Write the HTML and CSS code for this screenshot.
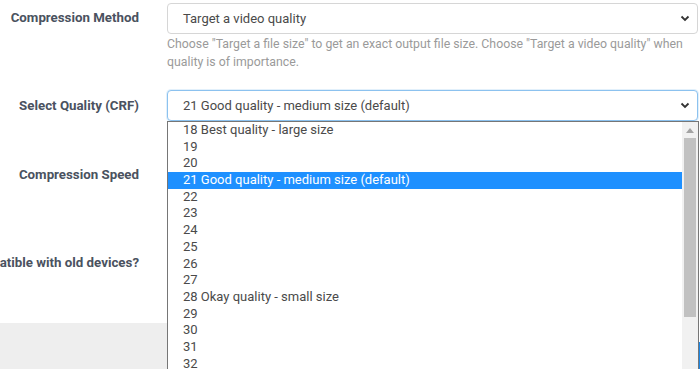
FILE: index.html
```html
<!DOCTYPE html>
<html>
<head>
<meta charset="utf-8">
<link rel="stylesheet" href="styles.css">
</head>
<body>
<div class="form">
  <div class="row row-method">
    <div class="label"><span>Compression Method</span></div>
    <div class="control">
      <div class="select">
        <span>Target a video quality</span>
        <svg class="chev" width="10" height="7" viewBox="0 0 10 7"><path d="M1.5 1.5 L5 5 L8.5 1.5" fill="none" stroke="#333" stroke-width="1.8"/></svg>
      </div>
      <p class="help">Choose "Target a file size" to get an exact output file size. Choose "Target a video quality" when quality is of importance.</p>
    </div>
  </div>
  <div class="row row-quality">
    <div class="label"><span>Select Quality (CRF)</span></div>
    <div class="control">
      <div class="select focus">
        <span>21 Good quality - medium size (default)</span>
        <svg class="chev" width="10" height="7" viewBox="0 0 10 7"><path d="M1.5 1.5 L5 5 L8.5 1.5" fill="none" stroke="#333" stroke-width="1.8"/></svg>
      </div>
    </div>
  </div>
  <div class="row row-speed">
    <div class="label"><span>Compression Speed</span></div>
    <div class="control"></div>
  </div>
  <div class="row row-compat">
    <div class="label"><span>Make the video compatible with old devices?</span></div>
    <div class="control"></div>
  </div>
  <div class="footer"></div>
  <div class="edge-button"></div>

  <div class="dropdown">
    <ul class="options">
      <li>18 Best quality - large size</li>
      <li>19</li>
      <li>20</li>
      <li class="sel">21 Good quality - medium size (default)</li>
      <li>22</li>
      <li>23</li>
      <li>24</li>
      <li>25</li>
      <li>26</li>
      <li>27</li>
      <li>28 Okay quality - small size</li>
      <li>29</li>
      <li>30</li>
      <li>31</li>
      <li>32</li>
      <li>33</li>
    </ul>
    <div class="scrollbar">
      <svg class="up" width="8" height="5" viewBox="0 0 8 5"><path d="M0 5 L4 0 L8 5 Z" fill="#a3a3a3"/></svg>
      <div class="thumb"></div>
    </div>
  </div>
</div>
</body>
</html>
```
FILE: styles.css
```css
html, body {
  margin: 0;
  padding: 0;
  background: #fff;
  overflow: hidden;
}
body {
  font-family: Roboto, "Liberation Sans", Arial, sans-serif;
  width: 700px;
  height: 369px;
}
.form {
  position: relative;
  width: 700px;
  height: 369px;
  overflow: hidden;
}
.row {
  display: grid;
  grid-template-columns: 139px 531px;
  column-gap: 28px;
}
.label {
  display: flex;
  justify-content: flex-end;
  font-size: 13.3px;
  font-weight: 700;
  color: #4a5260;
  white-space: nowrap;
  height: 31px;
  align-items: center;
  min-width: 0;
}
.row-method { padding-top: 3px; }
.row-method .label { height: 29px; }
.row-quality { padding-top: 19px; }
.row-quality .label { height: 31px; }
.row-speed { padding-top: 38px; }
.row-speed .label { height: 31px; }
.row-compat { padding-top: 57px; }
.row-compat .label { height: 31px; }
.select {
  box-sizing: border-box;
  height: 31px;
  border: 1px solid #d6d6d6;
  border-radius: 4px;
  display: flex;
  align-items: center;
  justify-content: space-between;
  padding: 0 7px 0 15px;
  font-size: 13px;
  color: #4a4a4a;
  background: #fff;
}
.select.focus {
  border-color: #8cc2ef;
  box-shadow: 0 0 0 1px rgba(140, 194, 239, 0.25);
}
.chev { display: block; }
.help {
  margin: 0;
  padding-top: 1px;
  font-size: 12.3px;
  line-height: 18px;
  color: #9a9a9a;
}
.footer {
  position: absolute;
  left: 0;
  top: 323px;
  width: 167px;
  height: 46px;
  background: #eeeeee;
}
.edge-button {
  position: absolute;
  left: 699px;
  top: 342px;
  width: 10px;
  height: 40px;
  background: #1e88e5;
}
.dropdown {
  position: absolute;
  left: 167px;
  top: 121px;
  width: 532px;
  height: 260px;
  box-sizing: border-box;
  border: 1px solid #767676;
  background: #fff;
  display: flex;
}
.options {
  list-style: none;
  margin: 0;
  padding: 0;
  flex: 1;
}
.options li {
  height: 16.7px;
  line-height: 16.7px;
  padding-left: 15px;
  font-size: 13px;
  color: #4a4a4a;
  white-space: nowrap;
}
.options li.sel {
  background: #1e90ff;
  color: #fff;
}
.scrollbar {
  width: 16px;
  background: #f1f1f1;
  position: relative;
}
.up {
  position: absolute;
  left: 4px;
  top: 6px;
}
.thumb {
  position: absolute;
  left: 2px;
  top: 16px;
  width: 12px;
  height: 179px;
  background: #c1c1c1;
}
```
